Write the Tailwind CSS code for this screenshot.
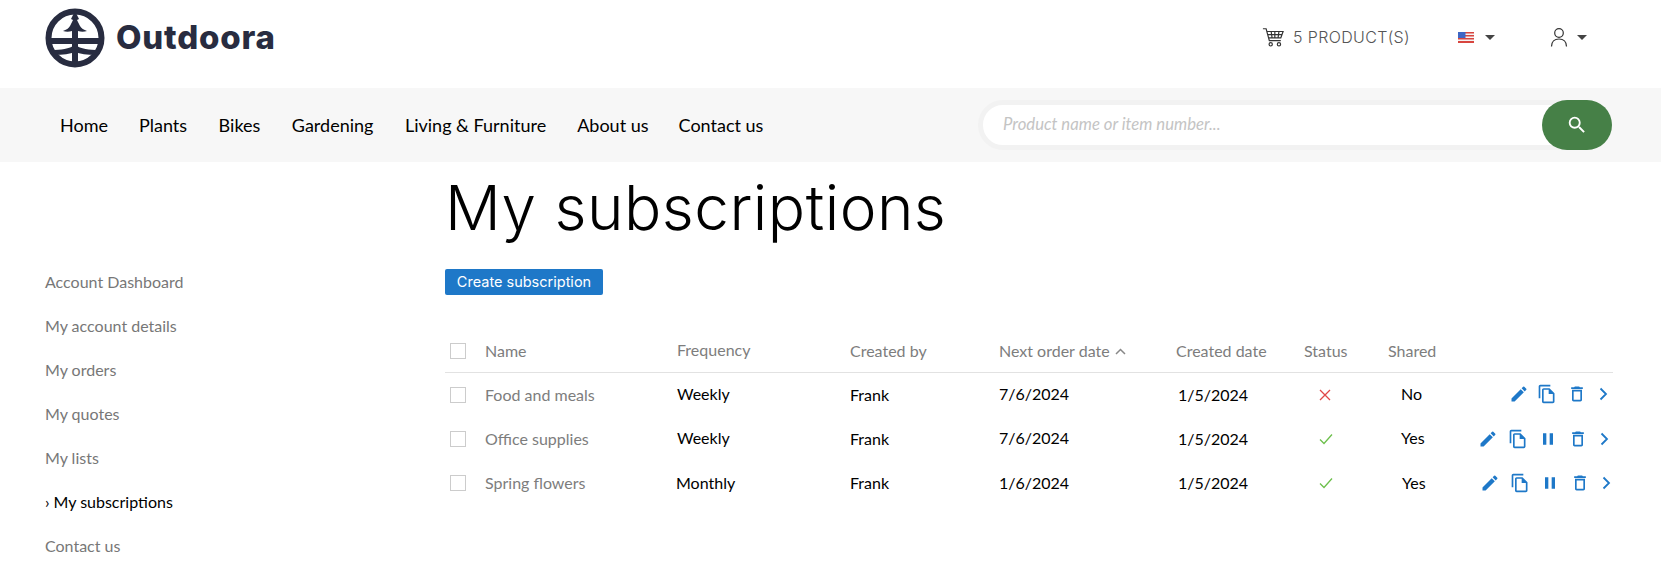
<!DOCTYPE html>
<html lang="en">
<head>
    <meta charset="UTF-8">
    <title>My subscriptions</title>
    <script src="https://cdn.jsdelivr.net/npm/@tailwindcss/browser@4"></script>
</head>
<body class="bg-white font-['Lato',sans-serif] text-[16px] text-black overflow-hidden h-[570px]">
    <!-- Header -->
    <header class="h-[88px] flex items-center pl-[45px] pr-[74px]">
        <svg class="w-[60px] h-[60px] mb-[12px]" viewBox="0 0 60 60" fill="none">
            <circle cx="30" cy="30" r="26.5" stroke="#282c40" stroke-width="6"/>
            <path d="M4 30h52v6H4zM6 42c10 0 18-1 24-5 6 4 14 5 24 5l-3 5c-9 0-16-1-21-3-5 2-12 3-21 3z" fill="#282c40"/>
            <path d="M30 3l4 8-2 1 3 6c1 2 4 4 7 5-3 1-6 1-9 0v33h-6V23c-3 1-6 1-9 0 3-1 6-3 7-5l3-6-2-1z" fill="#282c40"/>
        </svg>
        <span class="ml-[11px] mb-[12px] font-['Inter',sans-serif] font-extrabold text-[33px] tracking-[0.8px] text-[#282c40]">Outdoora</span>
        <div class="ml-auto flex items-center mb-[14px] text-[#555]">
            <svg class="w-[22px] h-[22px]" viewBox="0 0 24 24" fill="none" stroke="#333" stroke-width="1.3">
                <path d="M1 3h3.500l3.500 13h12.500M5.500 6H23l-2.500 7H7.500M10 6l1 7M14 6v7M18.500 6l-1 7M6.500 9.500h15.500"/>
                <circle cx="9.500" cy="20" r="1.800"/><circle cx="18.500" cy="20" r="1.800"/>
            </svg>
            <span class="ml-[9px] font-['Inter',sans-serif] text-[16px] font-light tracking-[0.35px]">5 PRODUCT(S)</span>
            <svg class="ml-[48px] w-[16px] h-[11px]" viewBox="0 0 16 11">
                <rect width="16" height="11" fill="#f4f4f4"/>
                <path d="M0 0h16v1.500H0zM0 3h16v1.500H0zM0 6h16v1.500H0zM0 9h16v2H0z" fill="#d8453f"/>
                <rect width="7.500" height="6" fill="#3f66c4"/>
            </svg>
            <span class="ml-[11px] w-0 h-0 border-x-[5px] border-x-transparent border-t-[5px] border-t-[#444]"></span>
            <svg class="ml-[55px] w-[18px] h-[20px]" viewBox="0 0 18 20" fill="none" stroke="#333" stroke-width="1.200">
                <circle cx="9" cy="6" r="4.300"/><path d="M1.500 19.500c0-5 3-7.500 7.500-7.500s7.500 2.500 7.500 7.500"/>
            </svg>
            <span class="ml-[9px] w-0 h-0 border-x-[5px] border-x-transparent border-t-[5px] border-t-[#444]"></span>
        </div>
    </header>

    <!-- Navigation -->
    <nav class="h-[74px] bg-[#f7f7f7] flex items-center pl-[60px] pr-[49px] text-[18px]">
        <a class="mr-[31px]">Home</a>
        <a class="mr-[31.500px]">Plants</a>
        <a class="mr-[31.500px]">Bikes</a>
        <a class="mr-[31.500px]">Gardening</a>
        <a class="mr-[31px]">Living &amp; Furniture</a>
        <a class="mr-[30px]">About us</a>
        <a>Contact us</a>
        <div class="ml-auto flex items-center w-[634px] h-[50px] relative">
            <div class="w-full h-[50px] rounded-full bg-white border-[5px] border-[#f2f2f2] flex items-center pl-[20px] italic text-[16.700px] text-[#c4c4c4]">Product name or item number...</div>
            <div class="absolute right-0 top-0 w-[70px] h-[50px] rounded-[25px] bg-[#468047] flex items-center justify-center">
                <svg class="w-[22px] h-[22px]" viewBox="0 0 24 24" fill="#fff"><path d="M15.500 14h-.79l-.28-.27A6.471 6.471 0 0 0 16 9.500 6.500 6.500 0 1 0 9.500 16c1.610 0 3.090-.59 4.230-1.570l.27.28v.79l5 4.990L20.490 19l-4.990-5zm-6 0C7.010 14 5 11.990 5 9.500S7.010 5 9.500 5 14 7.010 14 9.500 11.990 14 9.500 14z"/></svg>
            </div>
        </div>
    </nav>

    <div class="flex pl-[45px]">
        <!-- Sidebar -->
        <aside class="w-[400px] pt-[109px] flex flex-col gap-[22px] text-[#777] leading-[22px]">
            <a>Account Dashboard</a>
            <a>My account details</a>
            <a>My orders</a>
            <a>My quotes</a>
            <a>My lists</a>
            <a class="text-black"><span class="mr-[4px]">›</span>My subscriptions</a>
            <a>Contact us</a>
        </aside>

        <!-- Main -->
        <main class="w-[1168px]">
            <h1 class="font-['Inter',sans-serif] font-light text-[62px] leading-[72px] mt-[10px] tracking-[0.5px]">My subscriptions</h1>
            <button class="mt-[25px] h-[26px] w-[158px] rounded-[2px] bg-[#1e78c8] text-white text-[14.500px] font-['Inter',sans-serif]">Create subscription</button>

            <div class="mt-[35px] h-[43px] grid grid-cols-[40px_192px_173px_149px_177px_127px_85px_62px_163px] items-center text-[#7d7d7d] border-b border-[#e2e2e2]">
                <span class="ml-[5px] w-[16px] h-[16px] border border-[#ccc]"></span>
                <span>Name</span>
                <span class="mb-[2px]">Frequency</span>
                <span>Created by</span>
                <span class="flex items-center gap-[5px]">Next order date
                    <svg class="w-[11px] h-[7px]" viewBox="0 0 11 7" fill="none" stroke="#888" stroke-width="1.500"><path d="M1 6l4.500-4.500L10 6"/></svg>
                </span>
                <span>Created date</span>
                <span class="ml-[1px]">Status</span>
                <span>Shared</span>
                <span></span>
            </div>

            <!-- Rows -->
            <div class="h-[44px] grid grid-cols-[40px_192px_173px_149px_177px_127px_85px_62px_163px] items-center">
                <span class="ml-[5px] w-[16px] h-[16px] border border-[#ccc]"></span>
                <span class="text-[#7d7d7d]">Food and meals</span>
                <span class="mb-[2px]">Weekly</span>
                <span>Frank</span>
                <span class="mb-[2px]">7/6/2024</span>
                <span class="ml-[2px]">1/5/2024</span>
                <svg class="ml-[16px] w-[12px] h-[12px]" viewBox="0 0 12 12" fill="none" stroke="#e04848" stroke-width="1.300"><path d="M1 1l10 10M11 1L1 11"/></svg>
                <span class="ml-[13px] mb-[2px]">No</span>
                <div class="flex items-center justify-end gap-[10px] pr-[5px] mb-[2px]">
                    <svg class="w-[20px] h-[20px] mr-[-2px]" viewBox="0 0 24 24" fill="#1e78c8"><path d="M3 17.250V21h3.750L17.810 9.940l-3.750-3.750L3 17.250zM20.710 7.040a1 1 0 0 0 0-1.410l-2.340-2.340a1 1 0 0 0-1.410 0l-1.830 1.830 3.750 3.750 1.830-1.830z"/></svg>
                    <svg class="w-[20px] h-[20px]" viewBox="0 0 24 24" fill="#1e78c8"><path d="M16 1H4c-1.100 0-2 .9-2 2v14h2V3h12V1zm-1 4H8c-1.100 0-1.990.9-1.990 2L6 21c0 1.100.89 2 1.990 2H19c1.100 0 2-.9 2-2V11l-6-6zM8 21V7h6v5h5v9H8z"/></svg>
                    <svg class="w-[20px] h-[20px]" viewBox="0 0 24 24" fill="#1e78c8"><path d="M6 19c0 1.100.9 2 2 2h8c1.100 0 2-.9 2-2V7H6v12zM8 9h8v10H8V9zm7.500-5l-1-1h-5l-1 1H5v2h14V4z"/></svg>
                    <svg class="w-[9px] h-[14px] ml-[2px]" viewBox="0 0 9 14" fill="none" stroke="#1e78c8" stroke-width="1.800"><path d="M1.500 1.500L7 7l-5.500 5.500"/></svg>
                </div>
            </div>
            <div class="h-[44px] grid grid-cols-[40px_192px_173px_149px_177px_127px_85px_62px_163px] items-center">
                <span class="ml-[5px] w-[16px] h-[16px] border border-[#ccc]"></span>
                <span class="text-[#7d7d7d]">Office supplies</span>
                <span class="mb-[2px]">Weekly</span>
                <span>Frank</span>
                <span class="mb-[2px]">7/6/2024</span>
                <span class="ml-[2px]">1/5/2024</span>
                <svg class="ml-[16px] w-[14px] h-[12px]" viewBox="0 0 14 12" fill="none" stroke="#6cbf4b" stroke-width="1.300"><path d="M1 6.500L5 10.500 13 1.500"/></svg>
                <span class="ml-[13px] mb-[2px]">Yes</span>
                <div class="flex items-center justify-end gap-[10px] pr-[4px]">
                    <svg class="w-[20px] h-[20px]" viewBox="0 0 24 24" fill="#1e78c8"><path d="M3 17.250V21h3.750L17.810 9.940l-3.750-3.750L3 17.250zM20.710 7.040a1 1 0 0 0 0-1.410l-2.340-2.340a1 1 0 0 0-1.410 0l-1.830 1.830 3.750 3.750 1.830-1.830z"/></svg>
                    <svg class="w-[20px] h-[20px]" viewBox="0 0 24 24" fill="#1e78c8"><path d="M16 1H4c-1.100 0-2 .9-2 2v14h2V3h12V1zm-1 4H8c-1.100 0-1.990.9-1.990 2L6 21c0 1.100.89 2 1.990 2H19c1.100 0 2-.9 2-2V11l-6-6zM8 21V7h6v5h5v9H8z"/></svg>
                    <svg class="w-[20px] h-[20px]" viewBox="0 0 24 24" fill="#1e78c8"><path d="M6 19h4V5H6v14zm8-14v14h4V5h-4z"/></svg>
                    <svg class="w-[20px] h-[20px]" viewBox="0 0 24 24" fill="#1e78c8"><path d="M6 19c0 1.100.9 2 2 2h8c1.100 0 2-.9 2-2V7H6v12zM8 9h8v10H8V9zm7.500-5l-1-1h-5l-1 1H5v2h14V4z"/></svg>
                    <svg class="w-[9px] h-[14px] ml-[2px]" viewBox="0 0 9 14" fill="none" stroke="#1e78c8" stroke-width="1.800"><path d="M1.500 1.500L7 7l-5.500 5.500"/></svg>
                </div>
            </div>
            <div class="h-[44px] grid grid-cols-[40px_192px_173px_149px_177px_127px_85px_62px_163px] items-center">
                <span class="ml-[5px] w-[16px] h-[16px] border border-[#ccc]"></span>
                <span class="text-[#7d7d7d]">Spring flowers</span>
                <span class="-ml-[1px]">Monthly</span>
                <span>Frank</span>
                <span>1/6/2024</span>
                <span class="ml-[2px]">1/5/2024</span>
                <svg class="ml-[16px] w-[14px] h-[12px]" viewBox="0 0 14 12" fill="none" stroke="#6cbf4b" stroke-width="1.300"><path d="M1 6.500L5 10.500 13 1.500"/></svg>
                <span class="ml-[14px]">Yes</span>
                <div class="flex items-center justify-end gap-[10px] pr-[2px]">
                    <svg class="w-[20px] h-[20px]" viewBox="0 0 24 24" fill="#1e78c8"><path d="M3 17.250V21h3.750L17.810 9.940l-3.750-3.750L3 17.250zM20.710 7.040a1 1 0 0 0 0-1.410l-2.340-2.340a1 1 0 0 0-1.410 0l-1.830 1.830 3.750 3.750 1.830-1.830z"/></svg>
                    <svg class="w-[20px] h-[20px]" viewBox="0 0 24 24" fill="#1e78c8"><path d="M16 1H4c-1.100 0-2 .9-2 2v14h2V3h12V1zm-1 4H8c-1.100 0-1.990.9-1.990 2L6 21c0 1.100.89 2 1.990 2H19c1.100 0 2-.9 2-2V11l-6-6zM8 21V7h6v5h5v9H8z"/></svg>
                    <svg class="w-[20px] h-[20px]" viewBox="0 0 24 24" fill="#1e78c8"><path d="M6 19h4V5H6v14zm8-14v14h4V5h-4z"/></svg>
                    <svg class="w-[20px] h-[20px]" viewBox="0 0 24 24" fill="#1e78c8"><path d="M6 19c0 1.100.9 2 2 2h8c1.100 0 2-.9 2-2V7H6v12zM8 9h8v10H8V9zm7.500-5l-1-1h-5l-1 1H5v2h14V4z"/></svg>
                    <svg class="w-[9px] h-[14px] ml-[2px]" viewBox="0 0 9 14" fill="none" stroke="#1e78c8" stroke-width="1.800"><path d="M1.500 1.500L7 7l-5.500 5.500"/></svg>
                </div>
            </div>
        </main>
    </div>
</body>
</html>
